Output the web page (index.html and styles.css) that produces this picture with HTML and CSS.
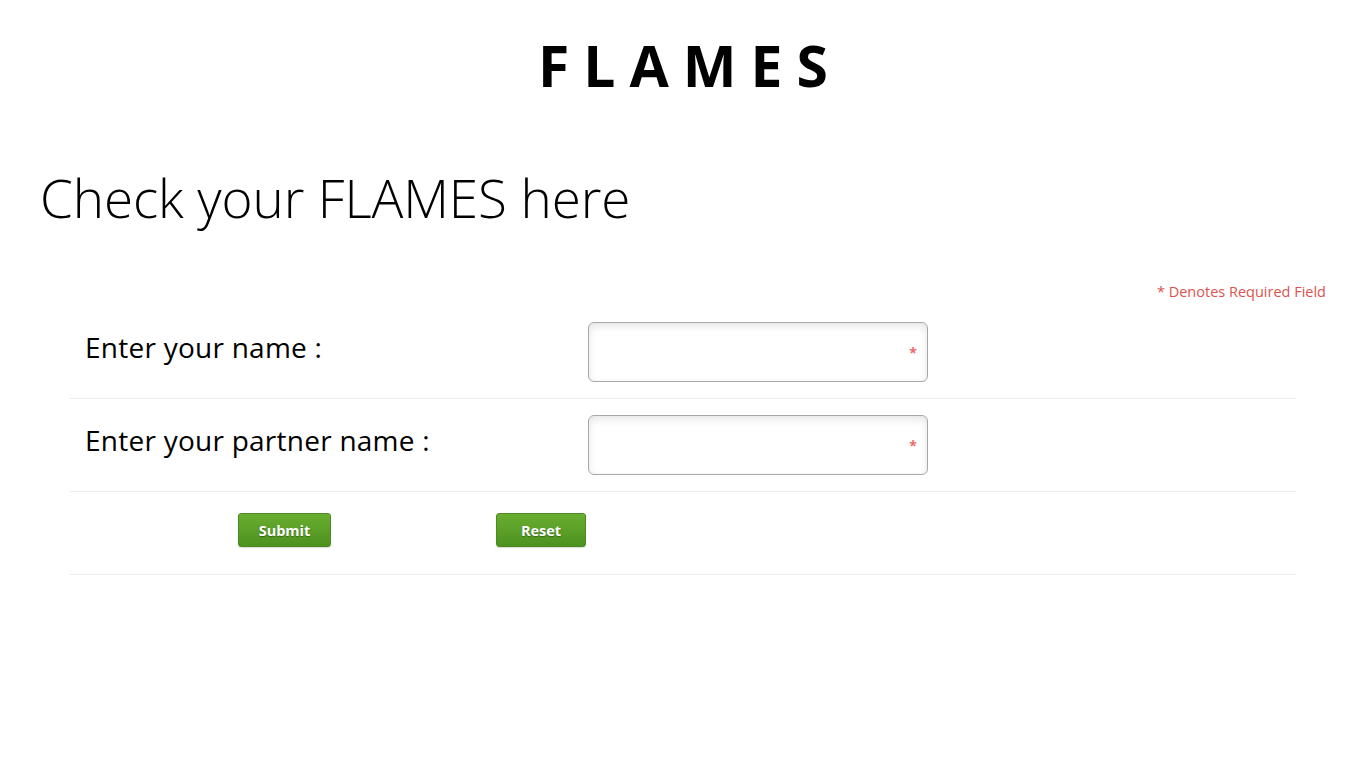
FILE: index.html
```html
<!DOCTYPE html>
<html lang="en">
<head>
<meta charset="utf-8">
<title>FLAMES</title>
<link rel="stylesheet" href="styles.css">
</head>
<body>
<header class="brand">FLAMES</header>
<h1 class="title">Check your FLAMES here</h1>
<p class="note">* Denotes Required Field</p>
<form class="form">
  <div class="row">
    <label class="label" for="name">Enter your name :</label>
    <div class="field">
      <input id="name" class="input" type="text">
      <span class="req">*</span>
    </div>
  </div>
  <div class="row">
    <label class="label" for="partner">Enter your partner name :</label>
    <div class="field">
      <input id="partner" class="input" type="text">
      <span class="req">*</span>
    </div>
  </div>
  <div class="row actions">
    <button type="button" class="btn btn-submit">Submit</button>
    <button type="reset" class="btn btn-reset">Reset</button>
  </div>
</form>
</body>
</html>
```
FILE: styles.css
```css
* { box-sizing: border-box; }
html, body { margin: 0; padding: 0; background: #fff; }
body {
  font-family: "Open Sans", "Segoe UI", sans-serif;
  color: #000;
  width: 1366px;
}
.brand {
  text-align: center;
  font-weight: 700;
  font-size: 57px;
  letter-spacing: 14px;
  padding-left: 14px;
  line-height: 80px;
  padding-top: 25px;
  height: 140px;
}
.title {
  margin: 0 0 0 40px;
  font-weight: 300;
  font-size: 53px;
  line-height: 70px;
  height: 118px;
  padding-top: 23px;
  letter-spacing: -0.1px;
}
.note {
  margin: 0;
  text-align: right;
  padding-right: 40px;
  color: #d9534f;
  font-size: 14.5px;
  line-height: 20px;
  height: 48px;
  padding-top: 24px;
}
.form {
  margin: 0 70px;
}
.row {
  display: flex;
  align-items: flex-start;
  border-bottom: 1px solid #ececec;
  padding: 16px 0;
}
.label {
  width: 518px;
  padding-left: 15px;
  padding-top: 5px;
  font-size: 28px;
  font-weight: 400;
  line-height: 40px;
  letter-spacing: 0.25px;
}
.field {
  position: relative;
  width: 340px;
  height: 60px;
}
.input {
  width: 340px;
  height: 60px;
  border: 1px solid #a8a8a8;
  border-radius: 6px;
  box-shadow: inset 0 4px 8px rgba(0,0,0,0.09), inset 0 0 3px rgba(0,0,0,0.05);
  background: #fff;
  font-family: inherit;
  font-size: 18px;
  padding: 0 30px 0 10px;
  outline: none;
}
.req {
  position: absolute;
  right: 11px;
  top: 23px;
  color: #ee6a6a;
  font-size: 14px;
  font-weight: 700;
  line-height: 16px;
}
.actions {
  padding: 21px 0 27px 168px;
  gap: 165px;
}
.btn {
  height: 34px;
  border: 1px solid #4b8a1f;
  border-radius: 3px;
  background: linear-gradient(#69ae30, #4d9120);
  color: #fff;
  font-family: inherit;
  font-weight: 700;
  font-size: 14.5px;
  text-shadow: 0 1px 1px rgba(0,0,0,0.35);
  box-shadow: 0 1px 1px rgba(0,0,0,0.15);
  padding: 0;
  cursor: pointer;
}
.btn-submit { width: 93px; }
.btn-reset { width: 90px; }
```
